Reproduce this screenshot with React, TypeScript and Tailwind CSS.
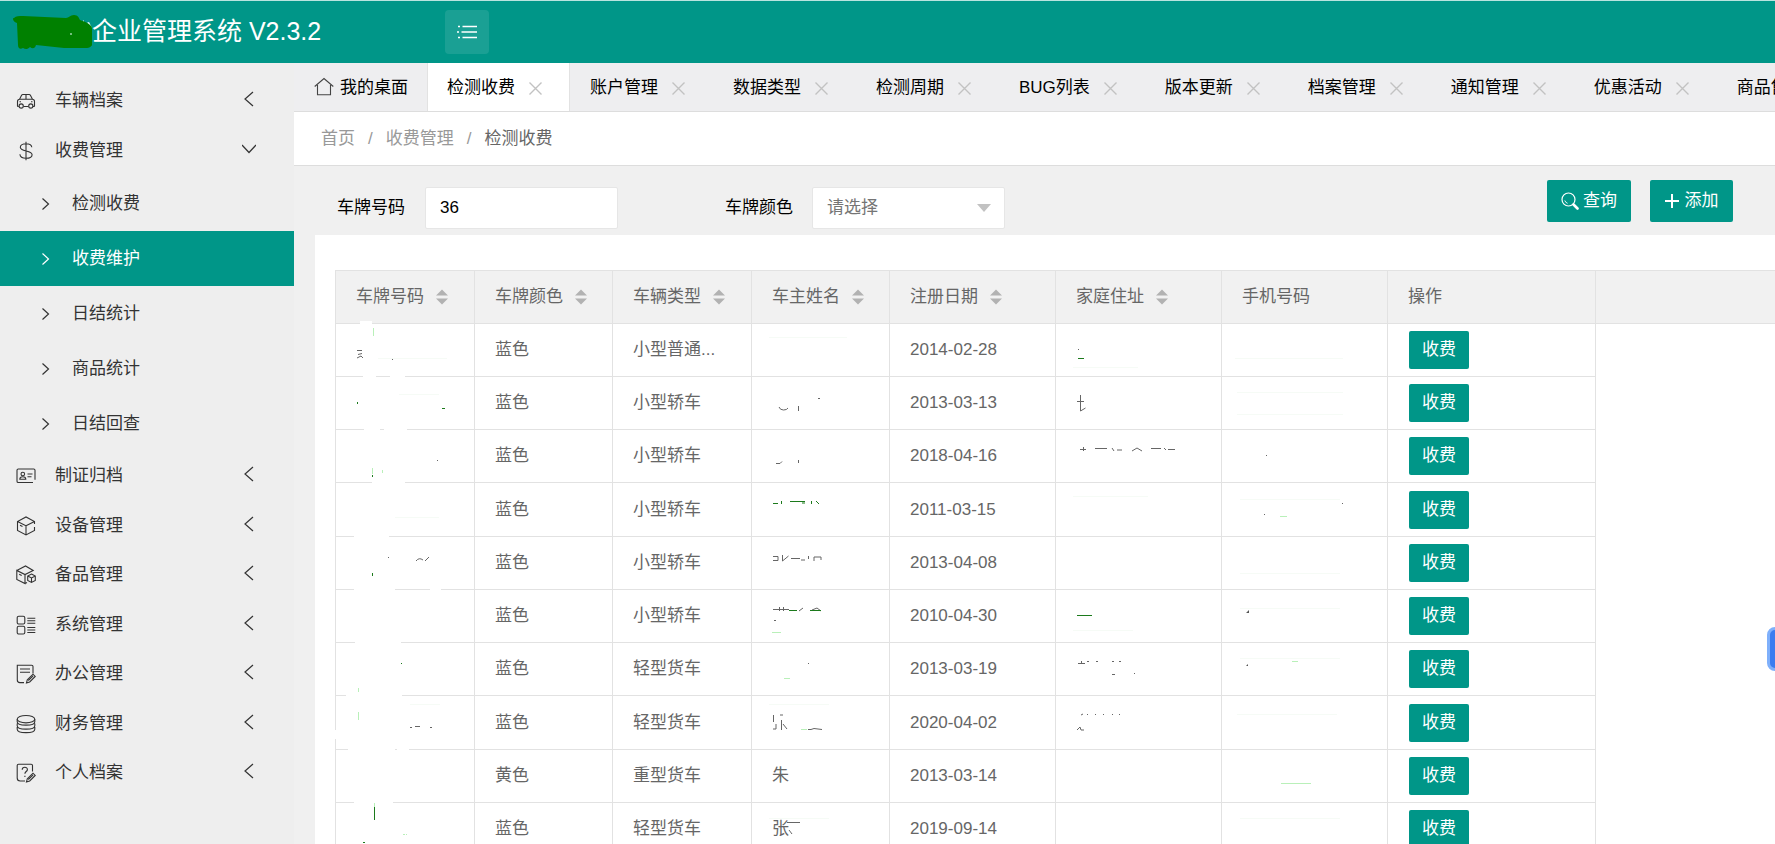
import type { ReactNode } from 'react';

type IconName =
  | 'car'
  | 'dollar'
  | 'idcard'
  | 'box'
  | 'boxes'
  | 'modules'
  | 'noteEdit'
  | 'database'
  | 'helpEdit';

const iconShapes: Record<IconName, ReactNode> = {
  car: (
    <>
      <path d="M3.5 8.2 5.6 4.2Q6 3.5 6.8 3.5h6.4q.8 0 1.2.7l2.1 4M10 3.5v4.7M1.5 15V10.500q0-2.300 2.300-2.300h12.400q2.300 0 2.300 2.300V15q0 .5-.5.5h-1.300M7.500 15.500h5M1.500 15q0 .5.5.5h.8" />
      <circle cx="5.200" cy="15" r="2.100" />
      <circle cx="14.800" cy="15" r="2.100" />
      <path d="M3.500 10.800h1.500M15 10.800h1.500" />
    </>
  ),
  dollar: (
    <path d="M10 .8v18.400M15.800 6.300C15.600 4 13.200 2.800 10 2.800S4.300 4 4.300 6.300c0 4.800 11.800 2.500 11.800 7.400 0 2.400-2.500 3.600-6.100 3.600s-5.900-1.500-6.100-4" />
  ),
  idcard: (
    <>
      <path d="M17 16.500H2.300q-1.300 0-1.300-1.300V4.300Q1 3 2.300 3h15.400Q19 3 19 4.300v9.500" />
      <circle cx="6.800" cy="8" r="1.800" />
      <path d="M3.800 13.200q0-2.500 3-2.500t3 2.500zM11.500 8h5M11.500 10.800h4" />
    </>
  ),
  box: (
    <path d="M18.500 8V5.600L10 1 1.500 5.600v8.900L10 19l8.500-4.500V11M10 19v-9.200L1.500 5.600M10 9.800l8.500-4.200M4 9.300l2.500 1.300" />
  ),
  boxes: (
    <>
      <path d="M9 9.600v9L.8 14.500V5.500L9 9.600l8.200-4.100L9.500 1 .8 5.500M9 18.600l2-1M3.200 9.200l2.500 1.300" />
      <path d="m15.500 9 3.800 2v4.500l-3.800 2-3.800-2V11zM11.700 11l3.800 2 3.800-2M15.500 13v4.500" />
    </>
  ),
  modules: (
    <>
      <rect x="1.200" y="1.200" width="7.600" height="7.800" rx="1.600" />
      <rect x="1.200" y="11.200" width="7.600" height="7.800" rx="1.600" />
      <path d="M11.300 3.200h8M11.300 5.700h8M11.300 8.200h8M11.300 12.500h8M11.300 15h8M11.300 17.500h8" />
    </>
  ),
  noteEdit: (
    <>
      <path d="M17 9.500V2.500Q17 1.200 15.700 1.200H1.300V16q0 2.600 2.600 2.600H8M4 5h10M4 8.300h10" />
      <path d="m10.500 19 .8-3.300 5.700-5.500 2.200 2.200-5.500 5.500zM12.300 16.500l4.800-4.600" />
    </>
  ),
  database: (
    <>
      <ellipse cx="10" cy="5.200" rx="8.800" ry="3.700" />
      <path d="M1.200 5.200v2.500c0 2 3.800 3.400 8.800 3.400s8.800-1.400 8.800-3.400V5.200M1.200 9.500v2.200c0 2 3.800 3.400 8.800 3.400s8.800-1.400 8.800-3.400V9.500M1.200 13v2.200c0 2 3.800 3.400 8.800 3.400s8.800-1.400 8.800-3.400V13" />
    </>
  ),
  helpEdit: (
    <>
      <path d="M16.500 8.500V2.500q0-1.300-1.300-1.300H2.500q-1.300 0-1.300 1.300V15q0 3 3 3H9" />
      <path d="M6.200 6.800c0-3.400 5.400-3.200 5.200-.2-.1 1.900-2.500 2-2.500 4.200M8.900 12.800v1.200" />
      <path d="m10.500 19 .8-3.300 5.700-5.500 2.200 2.200-5.500 5.500zM12.300 16.500l4.800-4.600" />
    </>
  ),
};

function MenuIcon({ name }: { name: IconName }) {
  return (
    <svg viewBox="0 0 20 20" className="size-5 shrink-0" fill="none" stroke="currentColor" strokeWidth="1.1" aria-hidden="true">
      {iconShapes[name]}
    </svg>
  );
}

function ChevronLeft() {
  return (
    <svg viewBox="0 0 14 16" className="mb-1 h-4 w-3.5" fill="none" stroke="currentColor" strokeWidth="1.200" aria-hidden="true">
      <path d="M11 1 3 8l8 7" />
    </svg>
  );
}

function ChevronDown() {
  return (
    <svg viewBox="0 0 14 16" className="mb-1 h-4 w-3.5" fill="none" stroke="currentColor" strokeWidth="1.200" aria-hidden="true">
      <path d="m0 4 7 7.500L14 4" />
    </svg>
  );
}

function MenuItem({ icon, label, open }: { icon: IconName; label: string; open?: boolean }) {
  return (
    <li className="h-[49px] odd:h-[50px]">
      <a href="#" className="flex h-full items-center pr-[38px] pl-4">
        <MenuIcon name={icon} />
        <span className="ml-[19px] flex-1">{label}</span>
        {open ? <ChevronDown /> : <ChevronLeft />}
      </a>
    </li>
  );
}

const subItems = ['检测收费', '收费维护', '日结统计', '商品统计', '日结回查'];

const lowerItems: { icon: IconName; label: string }[] = [
  { icon: 'idcard', label: '制证归档' },
  { icon: 'box', label: '设备管理' },
  { icon: 'boxes', label: '备品管理' },
  { icon: 'modules', label: '系统管理' },
  { icon: 'noteEdit', label: '办公管理' },
  { icon: 'database', label: '财务管理' },
  { icon: 'helpEdit', label: '个人档案' },
];

function Sidebar() {
  return (
    <nav className="w-[294px] shrink-0 bg-[#eeeeee] pt-[13px] text-[#333333]">
      <ul>
        <MenuItem icon="car" label="车辆档案" />
        <MenuItem icon="dollar" label="收费管理" open />
      </ul>
      <ul className="pt-px">
        {subItems.map((label) => (
          <li key={label}>
            <a
              href="#"
              className={
                label === '收费维护'
                  ? 'flex h-[55px] items-center bg-[#009688] pl-10 text-white'
                  : 'flex h-[55px] items-center pl-10'
              }
            >
              <svg viewBox="0 0 12 12" className="size-3" fill="none" stroke="currentColor" strokeWidth="1.200" aria-hidden="true">
                <path d="m2.500.5 6 5.500-6 5.500" />
              </svg>
              <span className="ml-5">{label}</span>
            </a>
          </li>
        ))}
      </ul>
      <ul>
        {lowerItems.map((item) => (
          <MenuItem key={item.label} icon={item.icon} label={item.label} />
        ))}
      </ul>
    </nav>
  );
}

function Header() {
  return (
    <header className="flex h-[63px] shrink-0 items-center border-t border-[#b9e4df] bg-[#009688] text-white">
      <svg viewBox="0 0 92 60" className="h-[60px] w-[92px] shrink-0" aria-hidden="true">
        <path d="M81 21l3-3v4l5-2 3 6-3 3z" fill="#e6fffb" />
        <path
          d="M14 16c2-2 5-2 9-2l43 2c3 0 4-3 8-3s5 3 6 5c3 1 9 3 11 6 3 4 1 9 2 14 1 4-2 8-6 8H64l-28-3c-1 4-4 4-6 2-3 3-5 2-7 1-3 2-5 0-5-3l-1-22c-4-1-5-5-3-5z"
          fill="#008000"
        />
        <path d="M70 32h2" stroke="#e6fffb" />
      </svg>
      <h1 className="w-[353px] shrink-0 pb-0.5 text-[25px] leading-8 font-normal whitespace-nowrap">企业管理系统 V2.3.2</h1>
      <button type="button" aria-label="菜单" className="flex size-11 items-center justify-center rounded bg-[#1aa094]">
        <svg viewBox="0 0 20 14" className="h-3.5 w-5" stroke="currentColor" strokeWidth="1.300" aria-hidden="true">
          <path d="M1 1.500h2M5.500 1.500H20M0 7h2M4.500 7H20M1 12.500h2M5.500 12.500H20" />
        </svg>
      </button>
    </header>
  );
}

const tabs = ['检测收费', '账户管理', '数据类型', '检测周期', 'BUG列表', '版本更新', '档案管理', '通知管理', '优惠活动', '商品售价'];

function TabBar() {
  return (
    <div className="flex h-[49px] overflow-hidden border-b border-[#dddddd] bg-[#eeeef0] text-black">
      <a href="#" className="flex w-[133px] shrink-0 items-center gap-1.5 pl-5">
        <svg viewBox="0 0 20 20" className="size-5" fill="none" stroke="#444" strokeWidth="1.100" aria-hidden="true">
          <path d="M.7 9.500 10 1.500l9.300 8M3.500 8v9.800h13V8" />
        </svg>
        <span className="pt-0.5">我的桌面</span>
      </a>
      {tabs.map((label) => (
        <div
          key={label}
          className={
            label === '检测收费'
              ? 'flex shrink-0 items-center border-x border-[#e2e2e2] bg-white pt-0.5 pr-[27px] pl-[19px]'
              : 'flex shrink-0 items-center border-x border-transparent pt-0.5 pr-[27px] pl-[19px]'
          }
        >
          <a href="#">{label}</a>
          <button type="button" aria-label={`关闭${label}`} className="ml-3.5">
            <svg viewBox="0 0 13 13" className="size-[13px]" stroke="#c2c2c2" strokeWidth="1.400" aria-hidden="true">
              <path d="m.5.5 12 12M12.500.5l-12 12" />
            </svg>
          </button>
        </div>
      ))}
    </div>
  );
}

function Breadcrumb() {
  return (
    <div className="flex h-[54px] items-center gap-[13px] border-b border-[#dddddd] bg-white pl-[27px] text-[#999999]">
      <a href="#">首页</a>
      <span>/</span>
      <a href="#">收费管理</a>
      <span>/</span>
      <span className="text-[#666666]">检测收费</span>
    </div>
  );
}

function SearchBar() {
  return (
    <form className="flex items-start pt-3.5 pr-[42px] text-black" onSubmit={(e) => e.preventDefault()}>
      <div className="flex items-center pt-[7px] pb-1.5">
        <label htmlFor="plate" className="w-[131px] shrink-0 pl-[43px]">
          车牌号码
        </label>
        <input
          id="plate"
          defaultValue="36"
          className="h-[42px] w-[193px] rounded-xs border border-[#e6e6e6] bg-white px-3.5 outline-none"
        />
        <label htmlFor="plate-color" className="w-[194px] shrink-0 pl-[107px]">
          车牌颜色
        </label>
        <div className="relative">
          <select
            id="plate-color"
            className="h-[42px] w-[193px] appearance-none rounded-xs border border-[#e6e6e6] bg-white px-3.5 text-[#757575] outline-none"
          >
            <option>请选择</option>
            <option>蓝色</option>
            <option>黄色</option>
          </select>
          <svg viewBox="0 0 14 8" className="pointer-events-none absolute top-[17px] right-3.5 h-2 w-3.5" fill="#c2c2c2" aria-hidden="true">
            <path d="M0 0h14L7 8z" />
          </svg>
        </div>
      </div>
      <div className="ml-auto flex gap-[19px] text-white">
        <button type="submit" className="flex h-[42px] w-[84px] items-center justify-center gap-1 rounded-xs bg-[#009688]">
          <svg viewBox="0 0 18 18" className="size-[18px]" fill="none" stroke="currentColor" aria-hidden="true">
            <circle cx="7.500" cy="7.500" r="6.500" strokeWidth="1.200" />
            <path d="M3.800 8.500a4 4 0 0 0 2.800 2.800" strokeWidth=".9" />
            <path d="m12.500 12.500 4 4" strokeWidth="2.600" strokeLinecap="round" />
          </svg>
          查询
        </button>
        <button type="button" className="flex h-[42px] w-[83px] items-center justify-center gap-1.5 rounded-xs bg-[#009688]">
          <svg viewBox="0 0 14 14" className="size-3.5" stroke="currentColor" strokeWidth="2" aria-hidden="true">
            <path d="M7 0v14M0 7h14" />
          </svg>
          添加
        </button>
      </div>
    </form>
  );
}

const columns = [
  { label: '车牌号码', sortable: true },
  { label: '车牌颜色', sortable: true },
  { label: '车辆类型', sortable: true },
  { label: '车主姓名', sortable: true },
  { label: '注册日期', sortable: true },
  { label: '家庭住址', sortable: true },
  { label: '手机号码', sortable: false },
  { label: '操作', sortable: false },
];

const rows = [
  { color: '蓝色', type: '小型普通...', owner: '', date: '2014-02-28' },
  { color: '蓝色', type: '小型轿车', owner: '', date: '2013-03-13' },
  { color: '蓝色', type: '小型轿车', owner: '', date: '2018-04-16' },
  { color: '蓝色', type: '小型轿车', owner: '', date: '2011-03-15' },
  { color: '蓝色', type: '小型轿车', owner: '', date: '2013-04-08' },
  { color: '蓝色', type: '小型轿车', owner: '', date: '2010-04-30' },
  { color: '蓝色', type: '轻型货车', owner: '', date: '2013-03-19' },
  { color: '蓝色', type: '轻型货车', owner: '', date: '2020-04-02' },
  { color: '黄色', type: '重型货车', owner: '朱', date: '2013-03-14' },
  { color: '蓝色', type: '轻型货车', owner: '张', date: '2019-09-14' },
];

function SortArrows() {
  return (
    <svg viewBox="0 0 12 16" className="h-4 w-3" fill="#b2b2b2" aria-hidden="true">
      <path d="M0 6.500h12L6 .5zM0 9.500h12l-6 6z" />
    </svg>
  );
}

/* Eraser strokes over the private columns, with the specks they leave behind. */
function EraserMarks() {
  return (
    <svg viewBox="0 0 1060 580" className="pointer-events-none absolute top-0 left-0 h-[580px] w-[1060px]" fill="none" aria-hidden="true">
      <path
        fill="#fff"
        d="M25 51h12v10H25zM28 100h13v10H28zM55 100h15v10H55zM29 154h16v10H29zM49 154h23v10H49zM37 207h33v10H37zM19 261h35v10H19zM19 314h41v10H19zM95 314h11v10H95zM20 367h46v10H20zM11 420h56v10H11zM0 460h2v9H0zM13 474h47v10H13zM62 474h12v10H62zM19 527h39v10H19z"
      />
      <path
        stroke="#666"
        d="M22 80.500h5M23 84.500l4-1M22 88l4-2 2 2M57 89.500h1M53 287.500h1M81 291q3-4 7-1M90 291l4-4M102 190.500h1M75 457.500h2M80 456.500h5M95 457.500h2M444 137q1 3 4.500 3t4.500-2M463.500 136v5M483 128.500h2M441 193.500h4l2-2M463.500 190v3M742 131.500h7M745.500 125v16l5-3M743 79.500h1M745 179.500h6M748.500 177v4M760 178.500h12M777 178l2 3M782 180h5M797 181l5-3 5 3M816 178.500h10M829 178l2 2M833 179.500h7M438 286.500h5v4h-5M447.500 285v6l6-5M456 288.500h9M466 290h4M473.500 286v3M479 291v-4h7v3M438 339.500h16M444.500 337v4M448.500 337v4M464 341l4-3M477 340l5-2 4 3M439 350.500h2M473 393.500h1M743 393.500h7M746.500 391v3M752 391.500h2M761 391.500h2M777 391.500h2M784 391.500h2M777 404.500h3M799 403.500h1M438.500 445v7M438 459h3v-5M446.500 450v10M448 454l4 5M445 445h3M473 459.500h3l3-1 8 1M746 445l2-1M752 444.500h1M760 444.500h1M768 444.500h1M777 444.500h1M784 444.500h1M742 460l3-3 1 3h3M452 552.500h13M454 560l3 4M931 185.500h1M1007 233.500h1M929 244.500h1"
      />
      <path fill="#555" d="m911 343 3-3v3zM911 396l2-2v2z" />
      <path
        stroke="#1c7a1c"
        d="M107 138.500h3M22.500 132v2M37.500 205v2M37.500 303v3M66 393.500h1M743 88.500h6M438 233.500h5M446.500 231v3M455 231.500h15M470 233h-3M476.500 231v3M481 231l3 3M454 340.500h8M475 340.500h11M742 345.500h15M28 572.500h2M39.500 537v13"
      />
      <path
        stroke="#b9f0b9"
        d="M38.500 58v8M37.500 198v6M47.500 200v3M23.500 418v4M23.500 442v8M68 564.500h2M71 564.500h1M39.500 533v4M437 362.500h9M449 408.500h6M466 459.500h6M945 246.500h7M971 338.500h11M957 391.500h6M971 444.500h11M946 513.500h30"
      />
      <path
        stroke="#f6fbf6"
        d="M43 88.500h69M64 124.500h40M60 247.500h44M75 434.500h30M434 67.500h78M738 97.500h65M738 226.500h75M738 360.500h60M900 88.500h108M902 122.500h106M902 144.500h106M905 229.500h100M905 303.500h100M905 338.500h100M905 388.500h100M902 444.500h100M905 548.500h100M434 434.500h60M434 548.500h60"
      />
    </svg>
  );
}

function DataTable() {
  return (
    <div className="relative">
      <table className="w-full table-fixed border-separate border-spacing-0 border-t border-l border-[#e2e2e2] text-left text-[#666666]">
        <colgroup>
          <col className="w-[139px]" />
          <col className="w-[138px]" />
          <col className="w-[139px]" />
          <col className="w-[138px]" />
          <col className="w-[166px]" />
          <col className="w-[166px]" />
          <col className="w-[166px]" />
          <col className="w-[208px]" />
          <col />
        </colgroup>
        <thead>
          <tr className="h-[53px] bg-[#f1f1f1]">
            {columns.map((column) => (
              <th key={column.label} className="border-r border-b border-[#e2e2e2] py-0 pl-5 font-normal">
                <span className="flex items-center gap-3">
                  {column.label}
                  {column.sortable && <SortArrows />}
                </span>
              </th>
            ))}
            <td className="border-b border-[#e2e2e2]" />
          </tr>
        </thead>
        <tbody className="[&_td:not(:last-child)]:border-r [&_td:not(:last-child)]:border-b [&_td]:border-[#e2e2e2] [&_td]:py-0 [&_td]:pl-5">
          {rows.map((row) => (
            <tr key={row.date} className="h-[53px] nth-[4n]:h-[54px]">
              <td />
              <td>{row.color}</td>
              <td>{row.type}</td>
              <td>{row.owner}</td>
              <td>{row.date}</td>
              <td />
              <td />
              <td>
                <button type="button" className="ml-px block h-[38px] w-[60px] rounded-xs bg-[#009688] text-white">
                  收费
                </button>
              </td>
              <td />
            </tr>
          ))}
        </tbody>
      </table>
      <EraserMarks />
    </div>
  );
}

export default function App() {
  return (
    <div className="relative flex h-screen flex-col overflow-hidden bg-[#f0f0f0] font-['Liberation_Sans','Noto_Sans_CJK_SC',sans-serif] text-[17px] leading-6 font-normal">
      <Header />
      <div className="flex min-h-0 flex-1">
        <Sidebar />
        <main className="flex min-w-0 flex-1 flex-col">
          <TabBar />
          <Breadcrumb />
          <SearchBar />
          <section className="ml-[21px] min-h-0 flex-1 overflow-hidden bg-white pt-[35px] pl-5">
            <DataTable />
          </section>
        </main>
      </div>
      <button
        type="button"
        aria-label="展开工具"
        className="absolute -right-9 bottom-[173px] size-11 rounded-lg border-3 border-[#7fb0fb] bg-[#3b7cf0]"
      />
    </div>
  );
}
